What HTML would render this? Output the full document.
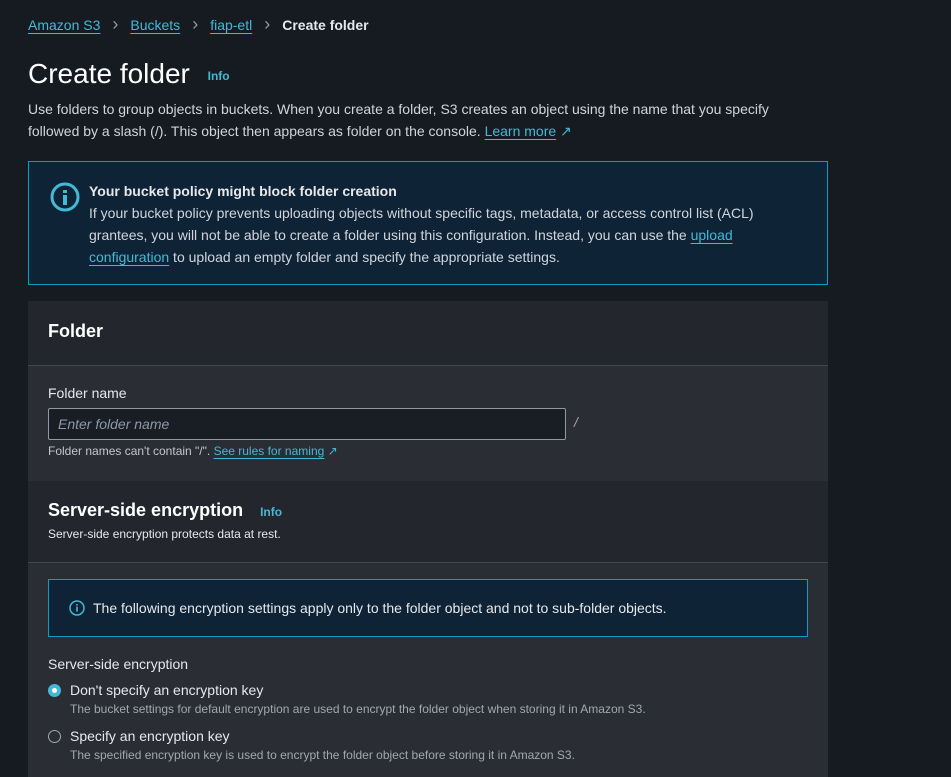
<!DOCTYPE html>
<html><head><meta charset="utf-8"><style>
*{box-sizing:border-box;margin:0;padding:0}
body{width:951px;height:777px;overflow:hidden;background:#161a21;font-family:"Liberation Sans",sans-serif;color:#d1d5db;font-size:14px;position:relative}
a{color:#44b9d6;text-decoration:underline;text-underline-offset:3px}
.abs{position:absolute}
.crumb{top:17px;left:28px;font-size:14px;color:#44b9d6;white-space:nowrap}
.crumb span.sep{color:#8d99a8;margin:0 12px;font-size:18px;line-height:14px}
h1{position:absolute;left:28px;top:58px;font-size:28px;font-weight:normal;color:#fff}
.info{color:#44b9d6;font-size:12px;font-weight:bold}
.desc{left:28px;top:98px;width:770px;line-height:22px;color:#d1d5db;font-size:14px}
.alert{left:28px;top:161px;width:800px;height:124px;background:#0f2336;border:1px solid #0a9ec0}
.card{left:28px;top:301px;width:800px;height:476px;background:#2a2d33}
.hdr1{left:28px;top:301px;width:800px;height:65px;background:#23262d;border-bottom:1px solid #414750}
.hdr2{left:28px;top:481px;width:800px;height:82px;background:#23262d;border-bottom:1px solid #414750}
.input{left:48px;top:408px;width:518px;height:32px;background:#191d24;border:1px solid #8d99a8;border-radius:2px;font-style:italic;color:#8d99a8;padding:7px 9px;font-size:14px}
.small{font-size:12px;color:#c6c6cd}
.radio{width:13px;height:13px;border-radius:50%;border:1px solid #a0a8b3}
</style></head><body>
<div class="abs crumb"><a>Amazon S3</a><span class="sep">&#x203A;</span><a>Buckets</a><span class="sep">&#x203A;</span><a>fiap-etl</a><span class="sep">&#x203A;</span><b style="color:#e6e8eb">Create folder</b></div>
<h1>Create folder <span class="info" style="margin-left:10px;vertical-align:middle">Info</span></h1>
<div class="abs desc">Use folders to group objects in buckets. When you create a folder, S3 creates an object using the name that you specify followed by a slash (/). This object then appears as folder on the console. <a>Learn more</a> <span style="color:#44b9d6">&#x2197;</span></div>
<div class="abs alert"></div>
<svg class="abs" style="left:49px;top:181px" width="34" height="34" viewBox="0 0 34 34"><circle cx="16" cy="16" r="13" fill="none" stroke="#44b9d6" stroke-width="3"/><rect x="14" y="9" width="4" height="3" fill="#44b9d6"/><rect x="14" y="14" width="4" height="10" fill="#44b9d6"/></svg>
<div class="abs" style="left:89px;top:180px;width:720px;line-height:22px;color:#d1d5db"><b style="color:#e6e8eb">Your bucket policy might block folder creation</b><br>If your bucket policy prevents uploading objects without specific tags, metadata, or access control list (ACL) grantees, you will not be able to create a folder using this configuration. Instead, you can use the <a>upload configuration</a> to upload an empty folder and specify the appropriate settings.</div>
<div class="abs card"></div>
<div class="abs hdr1"></div>
<div class="abs" style="left:48px;top:321px;font-size:18px;font-weight:bold;color:#fff">Folder</div>
<div class="abs" style="left:48px;top:385px;color:#e6e8eb">Folder name</div>
<div class="abs input">Enter folder name</div>
<div class="abs" style="left:574px;top:414px;color:#a0a8b3;font-style:italic">/</div>
<div class="abs small" style="left:48px;top:444px">Folder names can't contain "/". <a>See rules for naming</a> <span style="color:#44b9d6">&#x2197;</span></div>
<div class="abs hdr2"></div>
<div class="abs" style="left:48px;top:500px;font-size:18px;font-weight:bold;color:#fff">Server-side encryption <span class="info" style="margin-left:12px">Info</span></div>
<div class="abs small" style="left:48px;top:527px;color:#e6e8eb">Server-side encryption protects data at rest.</div>
<div class="abs" style="left:48px;top:579px;width:760px;height:58px;background:#0f2336;border:1px solid #0a9ec0"></div>
<svg class="abs" style="left:68px;top:599px" width="18" height="18" viewBox="0 0 18 18"><circle cx="9" cy="9" r="7" fill="none" stroke="#44b9d6" stroke-width="1.5"/><rect x="8.2" y="5" width="1.6" height="1.6" fill="#44b9d6"/><rect x="8.2" y="7.6" width="1.6" height="5" fill="#44b9d6"/></svg>
<div class="abs" style="left:93px;top:600px;color:#e6e8eb">The following encryption settings apply only to the folder object and not to sub-folder objects.</div>
<div class="abs" style="left:48px;top:656px;color:#e6e8eb">Server-side encryption</div>
<div class="abs radio" style="left:48px;top:684px;border:4px solid #44b9d6;background:#fff"></div>
<div class="abs" style="left:70px;top:682px;color:#e6e8eb">Don't specify an encryption key</div>
<div class="abs small" style="left:70px;top:702px;color:#a0a8b3">The bucket settings for default encryption are used to encrypt the folder object when storing it in Amazon S3.</div>
<div class="abs radio" style="left:48px;top:730px"></div>
<div class="abs" style="left:70px;top:728px;color:#e6e8eb">Specify an encryption key</div>
<div class="abs small" style="left:70px;top:748px;color:#a0a8b3">The specified encryption key is used to encrypt the folder object before storing it in Amazon S3.</div>
</body></html>
